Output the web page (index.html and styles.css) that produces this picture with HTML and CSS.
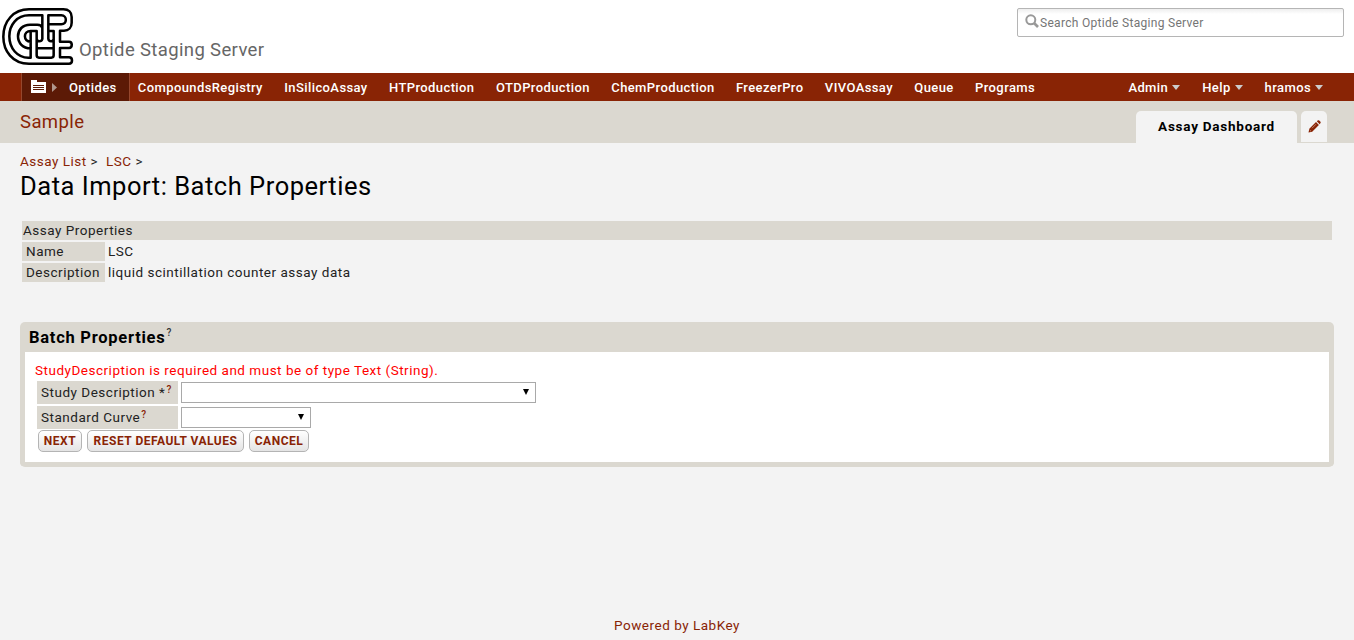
FILE: index.html
```html
<!DOCTYPE html>
<html lang="en">
<head>
<meta charset="utf-8">
<title>Data Import: Batch Properties</title>
<link rel="stylesheet" href="styles.css">
</head>
<body>
<header class="header">
  <svg class="logo" width="75" height="68" viewBox="0 0 225 204" fill="none" stroke="#000" stroke-width="7.6" stroke-linejoin="round">
    <path d="M87 28H190C206 28 215 37 215 51V68C215 82 206 92 192 92H180V125H207C218 125 218 144 207 144H180V172H207C219 172 219 191 207 191H87C38 191 10 153 10 110C10 64 40 28 87 28Z"/>
    <path d="M127 118V46H87C50 46 28 75 28 109C28 145 52 173 85 173H92V145C68 145 54 129 54 109C54 89 68 74 90 74H112Q124 74 127 84"/>
    <path d="M145 118V46H184C202 46 202 73 184 73H147M92 125C69 125 69 93 92 93V125M92 93H110V166Q110 173 117 173H154Q161 173 161 166V93H147M92 145V125M110 145H161M110 116Q111 124 118 124T127 117M145 116Q146 124 153 124T161 117"/>
  </svg>
  <span class="server-name">Optide Staging Server</span>
  <div class="search">
    <svg width="15" height="15" viewBox="0 0 15 15" fill="none" stroke="#999" stroke-width="2"><circle cx="5.8" cy="5.8" r="4.5"/><path d="M9 9L13 13" stroke-width="2.7"/></svg>
    <span>Search Optide Staging Server</span>
  </div>
</header>
<nav class="menubar">
  <div class="project">
    <svg width="28" height="14" viewBox="0 0 28 14"><path d="M0 0H6V2H15V13H0Z" fill="#fff"/><path d="M2 5.5H13M2 7.5H13M2 9.5H13" stroke="#5c1a06"/><path d="M21 3L26 7.5L21 12Z" fill="#b1988e"/></svg>
    <span>Optides</span>
  </div>
  <div class="links"><a>CompoundsRegistry</a><a>InSilicoAssay</a><a>HTProduction</a><a>OTDProduction</a><a>ChemProduction</a><a>FreezerPro</a><a>VIVOAssay</a><a>Queue</a><a>Programs</a></div>
  <div class="user-links"><a>Admin<i class="caret"></i></a><a>Help<i class="caret"></i></a><a>hramos<i class="caret"></i></a></div>
</nav>
<div class="folderbar">
  <span class="folder-title">Sample</span>
  <div class="tab">Assay Dashboard</div>
  <div class="edit-tab"><svg width="13" height="13" viewBox="0 0 13 13"><path d="M0.5 12.5L1.3 8.8L8 2.1L10.9 5L4.2 11.7ZM8.8 1.3L10 .3Q10.6 0 11.2.5L12.5 1.8Q13 2.4 12.5 3L11.7 4.2Z" fill="#892405"/><path d="M4 8.2L8 4.2M1.7 10L3 11.3" stroke="#d9a797" stroke-width=".7"/></svg></div>
</div>
<main class="content">
  <div class="crumbs"><a>Assay List</a> &gt;&nbsp; <a>LSC</a> &gt;</div>
  <h1>Data Import: Batch Properties</h1>
  <div class="properties">
    <div class="props-head">Assay Properties</div>
    <div class="prop-label">Name</div><div class="prop-value">LSC</div>
    <div class="prop-label">Description</div><div class="prop-value">liquid scintillation counter assay data</div>
  </div>
  <section class="portlet">
    <h2>Batch Properties<sup>?</sup></h2>
    <div class="portlet-body">
      <div class="error">StudyDescription is required and must be of type Text (String).</div>
      <div class="form">
        <div class="form-label">Study Description *<sup>?</sup></div><div class="dropdown wide"><i></i></div>
        <div class="form-label">Standard Curve<sup>?</sup></div><div class="dropdown"><i></i></div>
      </div>
      <div class="buttons"><button class="b-next">NEXT</button><button class="b-reset">RESET DEFAULT VALUES</button><button class="b-cancel">CANCEL</button></div>
    </div>
  </section>
</main>
<footer class="footer">Powered by LabKey</footer>
</body>
</html>
```
FILE: styles.css
```css
* { box-sizing: border-box; }
body { margin: 0; height: 640px; background: #f3f3f3; font: 13.5px/19px Roboto, sans-serif; letter-spacing: .51px; color: #222; display: flex; flex-direction: column; white-space: nowrap; overflow: hidden; }
.header { height: 73px; background: #fff; display: flex; align-items: flex-start; flex: none; padding-right: 10px; }
.logo { flex: none; }
.server-name { font-size: 18.5px; line-height: 24px; letter-spacing: .36px; color: #666; margin: 38px 0 0 4px; }
.search { margin: 8px 0 0 auto; width: 327px; height: 29px; border: 1px solid #b5b5b5; border-radius: 2px; background: linear-gradient(#eee, #fff 5px); display: flex; align-items: center; padding-left: 7px; font-size: 12px; letter-spacing: .3px; color: #757575; }
.search svg { margin-top: -2px; }
.search span { padding-top: 2px; }
.menubar { height: 28px; background: #892405; color: #fff; display: flex; flex: none; font-size: 13px; font-weight: 500; line-height: 29px; letter-spacing: .4px; padding-left: 21px; }
.project { width: 109px; background: #5c1a06; border: solid #96472d; border-width: 0 1px; display: flex; padding-left: 9px; }
.project svg { margin: 7px 10px 0 0; }
.links { display: flex; gap: 21.4px; padding-left: 7.8px; }
.user-links { display: flex; gap: 22px; margin-left: auto; padding-right: 31px; }
.caret { display: inline-block; border: 4.5px solid transparent; border-width: 5px 4px 0; border-top-color: #ccc; margin: 0 0 2px 4px; }
.folderbar { height: 42px; background: #dbd8d0; display: flex; flex: none; padding: 0 27px 0 20px; }
.folder-title { font-size: 18.5px; line-height: 42px; letter-spacing: .4px; color: #892405; margin-right: auto; }
.tab { margin-top: 10px; width: 161px; height: 32px; background: #f3f3f3; border-radius: 5px 5px 0 0; text-align: center; font-weight: 700; line-height: 31px; letter-spacing: .75px; color: #000; }
.edit-tab { margin: 10px 0 0 4px; width: 26px; height: 31px; background: #f3f3f3; border-radius: 5px 5px 0 0; padding: 9px 0 0 7px; line-height: 0; }
.content { padding: 9px 20px 0; }
.crumbs a { color: #892405; }
h1 { margin: 0; font-size: 25.5px; font-weight: 400; line-height: 30px; height: 30px; letter-spacing: .52px; color: #000; }
.properties { margin: 20px 2px 0; display: grid; grid-template-columns: 83px 1fr; gap: 2px 0; }
.props-head { grid-column: 1 / 3; background: #dbd8d0; padding-left: 1px; }
.prop-label { background: #dbd8d0; padding-left: 4px; }
.prop-value { padding-left: 3px; }
.portlet { margin-top: 40px; height: 145px; border: 5px solid #dbd8d0; border-top: 0; border-radius: 5px; background: #fff; }
h2 { margin: 0; height: 30px; background: #dbd8d0; font-size: 16.5px; font-weight: 700; line-height: 31px; letter-spacing: .74px; color: #000; padding-left: 4px; }
sup { font-size: 10px; font-weight: 500; line-height: 0; vertical-align: baseline; position: relative; top: -4px; margin-left: 1px; color: #892405; }
h2 sup { color: #333; top: -7px; }
.portlet-body { padding: 9px 10px 0; }
.error { color: #f00; }
.form { display: grid; grid-template-columns: 141px 1fr; gap: 2px 3px; margin: 1px 0 0 2px; }
.form-label { height: 23px; line-height: 23px; background: #dbd8d0; padding-left: 4px; }
.dropdown { margin-top: 1px; width: 130px; height: 21px; border: 1px solid #a9a9a9; position: relative; }
.wide { width: 355px; }
.dropdown i { position: absolute; right: 6px; top: 6px; border: 3px solid transparent; border-top: 6px solid #000; border-bottom: 0; }
.buttons { display: flex; gap: 5px; margin: 1px 0 0 3px; }
button { height: 22px; padding: 0; border: 1px solid #b4b4b4; border-radius: 5px; background: linear-gradient(#fff, #e4e4e4); font: 700 12px/19px Roboto, sans-serif; letter-spacing: .5px; color: #892405; }
.b-next { width: 44px; }
.b-reset { width: 157px; }
.b-cancel { width: 60px; }
.footer { margin-top: auto; height: 24px; text-align: center; color: #892405; }
```
